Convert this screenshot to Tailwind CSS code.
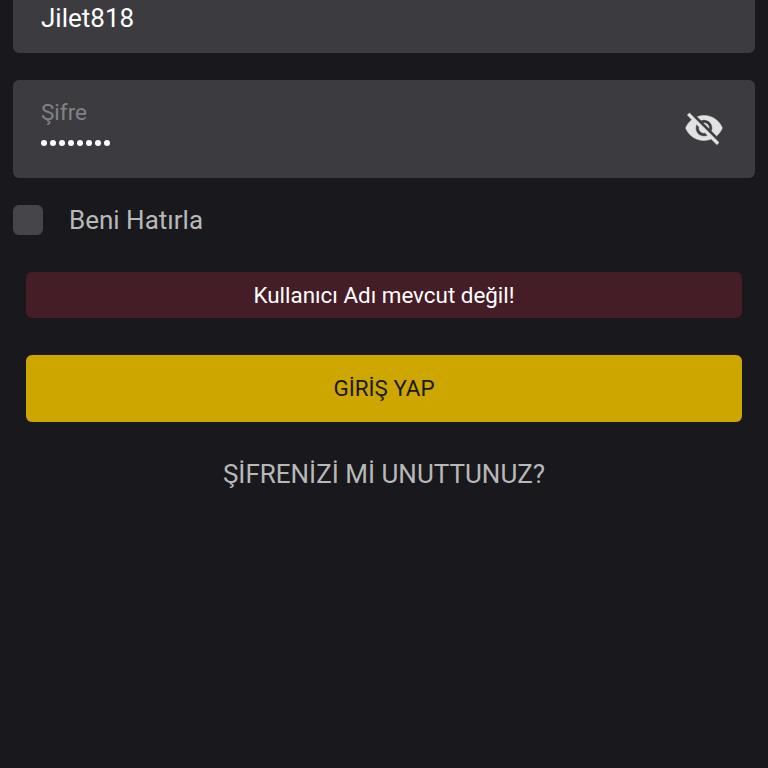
<!DOCTYPE html>
<html lang="tr">
<head>
  <meta charset="UTF-8">
  <meta name="viewport" content="width=device-width, initial-scale=1.0">
  <title>Giriş</title>
  <script src="https://cdn.jsdelivr.net/npm/@tailwindcss/browser@4"></script>
</head>
<body class="bg-[#19191d] font-['Roboto',sans-serif] overflow-hidden">
  <div class="h-[768px] overflow-hidden px-[13px]">
    <!-- Username -->
    <div class="h-[53px] rounded-b-[6px] bg-[#3c3c40] pl-[28px] text-[26px] leading-[37px] text-white">Jilet818</div>

    <!-- Password -->
    <div class="mt-[27px] flex h-[98px] items-center justify-between rounded-[6px] bg-[#3c3c40] pl-[28px] pr-[31px]">
      <div class="self-start pt-[19px]">
        <div class="text-[22.5px] leading-[26px] text-[#828286]">Şifre</div>
        <div class="mt-[15px] flex gap-[3px]">
          <span class="size-[6px] rounded-full bg-white"></span>
          <span class="size-[6px] rounded-full bg-white"></span>
          <span class="size-[6px] rounded-full bg-white"></span>
          <span class="size-[6px] rounded-full bg-white"></span>
          <span class="size-[6px] rounded-full bg-white"></span>
          <span class="size-[6px] rounded-full bg-white"></span>
          <span class="size-[6px] rounded-full bg-white"></span>
          <span class="size-[6px] rounded-full bg-white"></span>
        </div>
      </div>
      <svg class="mb-[2px] h-[40px] w-[40px]" viewBox="0 0 24 24" fill="#e2e2e3" stroke="#e2e2e3" stroke-width="0.3"><path d="M12 7c2.76 0 5 2.24 5 5 0 .65-.13 1.26-.36 1.83l2.92 2.92c1.51-1.26 2.7-2.89 3.43-4.75-1.73-4.39-6-7.5-11-7.5-1.4 0-2.74.25-3.98.7l2.16 2.16C10.74 7.13 11.35 7 12 7zM2 4.27l2.28 2.28.46.46C3.08 8.3 1.78 10.02 1 12c1.73 4.39 6 7.5 11 7.5 1.55 0 3.03-.3 4.38-.84l.42.42L19.73 22 21 20.73 3.27 3 2 4.27zM7.53 9.8l1.55 1.55c-.05.21-.08.43-.08.65 0 1.66 1.34 3 3 3 .22 0 .44-.03.65-.08l1.55 1.55c-.67.33-1.41.53-2.2.53-2.76 0-5-2.24-5-5 0-.79.2-1.53.53-2.2zm4.31-.78l3.15 3.15.02-.16c0-1.66-1.34-3-3-3l-.17.01z"/></svg>
    </div>

    <!-- Remember me -->
    <div class="mt-[27px] flex h-[30px] items-center">
      <span class="size-[30px] rounded-[6px] bg-[#46464a]"></span>
      <span class="ml-[26px] text-[26px] leading-[30px] text-[#b8b8b8]">Beni Hatırla</span>
    </div>

    <div class="px-[13px]">
      <!-- Error -->
      <div class="mt-[37px] flex h-[46px] items-center justify-center rounded-[6px] bg-[#451d27] pt-[2px] text-[22.4px] text-white">Kullanıcı Adı mevcut değil!</div>

      <!-- Submit -->
      <button class="mt-[37px] flex h-[67px] w-full items-center justify-center rounded-[6px] bg-[#cda700] text-[22.4px] text-[#19191d]">GİRİŞ YAP</button>

      <!-- Forgot password -->
      <div class="mt-[35px] text-center text-[26px] leading-[34px] text-[#b8b8b8]">ŞİFRENİZİ Mİ UNUTTUNUZ?</div>
    </div>
  </div>
</body>
</html>
